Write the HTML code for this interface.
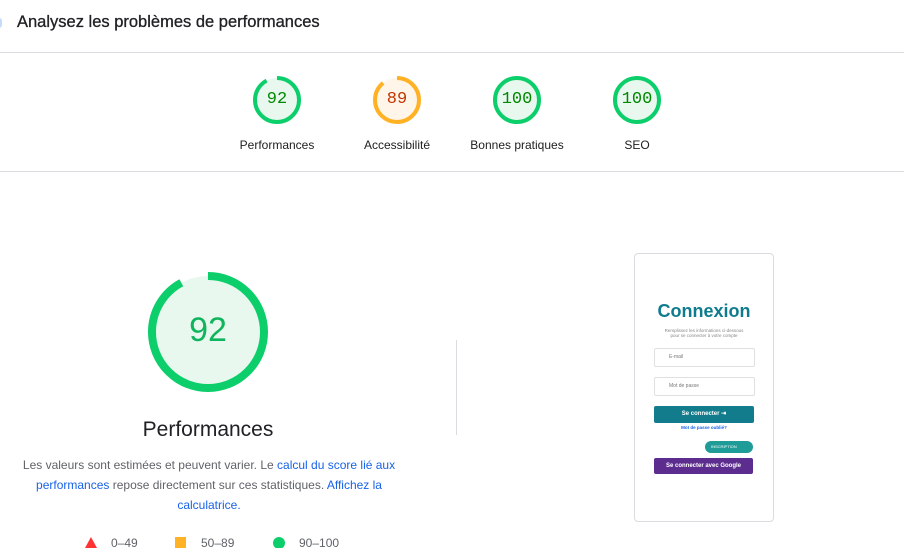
<!DOCTYPE html><html><head><meta charset="utf-8"><style>
body{margin:0;width:904px;height:548px;overflow:hidden;background:#fff;font-family:"Liberation Sans",sans-serif;position:relative}
.a{position:absolute}
.lbl{font-size:12px;color:#212121;text-align:center;width:120px}
.num{font-family:"Liberation Mono",monospace;font-size:17px;text-align:center;width:60px}
a{color:#1a62e8;text-decoration:none}
</style></head><body>
<div class="a" style="left:0;top:0;width:904px;height:52px;border-bottom:1px solid #dadce0"></div>
<div class="a" style="left:17px;top:13px;font-size:16.5px;color:#202124;-webkit-text-stroke:0.3px #202124">Analysez les problèmes de performances</div>
<div class="a" style="left:-4px;top:18px;width:6px;height:10px;border-radius:3px;background:#c6dafc"></div>
<div class="a" style="left:0;top:171px;width:904px;height:1px;background:#dadce0"></div>
<svg class="a" style="left:0;top:0" width="904" height="548">
<g fill="none" stroke-width="4">
<circle cx="277" cy="100" r="22" fill="#e8f8ee" stroke="none"/>
<circle cx="277" cy="100" r="22" stroke="#0cce6b" stroke-dasharray="127.2 138.2" transform="rotate(-90 277 100)"/>
<circle cx="397" cy="100" r="22" fill="#fff5e8" stroke="none"/>
<circle cx="397" cy="100" r="22" stroke="#ffa400" stroke-opacity=".85" stroke-dasharray="123 138.2" transform="rotate(-90 397 100)"/>
<circle cx="517" cy="100" r="22" fill="#e8f8ee" stroke="#0cce6b"/>
<circle cx="637" cy="100" r="22" fill="#e8f8ee" stroke="#0cce6b"/>
<circle cx="208" cy="332" r="56" fill="#e8f8ee" stroke="none"/>
<circle cx="208" cy="332" r="56" stroke="#0cce6b" stroke-width="8" stroke-dasharray="323.7 351.9" transform="rotate(-90 208 332)"/>
</g>
<line x1="456.5" y1="340" x2="456.5" y2="435" stroke="#dadce0"/>
<polygon points="91,537 97,548 85,548" fill="#ff3333"/>
<rect x="175" y="537" width="11" height="11" fill="#ffa400" opacity=".85"/>
<circle cx="279" cy="543" r="6" fill="#0cce6b"/>
</svg>
<div class="a num" style="left:247px;top:90px;color:#008800">92</div>
<div class="a num" style="left:367px;top:90px;color:#c33300">89</div>
<div class="a num" style="left:487px;top:90px;color:#008800">100</div>
<div class="a num" style="left:607px;top:90px;color:#008800">100</div>
<div class="a lbl" style="left:217px;top:138px">Performances</div>
<div class="a lbl" style="left:337px;top:138px">Accessibilité</div>
<div class="a lbl" style="left:457px;top:138px">Bonnes pratiques</div>
<div class="a lbl" style="left:577px;top:138px">SEO</div>
<div class="a" style="left:148px;top:311px;width:120px;text-align:center;font-size:34px;color:#0fb55c">92</div>
<div class="a" style="left:108px;top:418px;width:200px;text-align:center;font-size:21px;color:#202124">Performances</div>
<div class="a" style="left:18px;top:455px;width:382px;text-align:center;font-size:12px;line-height:20px;color:#5f6368">Les valeurs sont estimées et peuvent varier. Le <a>calcul du score lié aux performances</a> repose directement sur ces statistiques. <a>Affichez la calculatrice.</a></div>
<div class="a" style="left:111px;top:536px;font-size:12px;color:#5f6368">0–49</div>
<div class="a" style="left:201px;top:536px;font-size:12px;color:#5f6368">50–89</div>
<div class="a" style="left:299px;top:536px;font-size:12px;color:#5f6368">90–100</div>
<div class="a" style="left:634px;top:253px;width:138px;height:267px;border:1px solid #dadce0;border-radius:4px"></div>
<div class="a" style="left:634px;top:301px;width:140px;text-align:center;font-size:18px;font-weight:bold;color:#0e7c8e">Connexion</div>
<div class="a" style="left:664px;top:328px;width:80px;text-align:center;font-size:4.5px;line-height:5px;color:#888">Remplissez les informations ci-dessous pour se connecter à votre compte</div>
<div class="a" style="left:654px;top:348px;width:99px;height:17px;border:1px solid #e0e0e0;border-radius:2px;font-size:5px;color:#777;line-height:17px;text-indent:14px">E-mail</div>
<div class="a" style="left:654px;top:377px;width:99px;height:17px;border:1px solid #e0e0e0;border-radius:2px;font-size:5px;color:#777;line-height:17px;text-indent:14px">Mot de passe</div>
<div class="a" style="left:654px;top:406px;width:100px;height:17px;background:#137c8c;border-radius:2px;font-size:6px;color:#fff;line-height:17px;text-align:center;font-weight:bold">Se connecter ⇥</div>
<div class="a" style="left:654px;top:425px;width:100px;text-align:center;font-size:4.5px;color:#1a62e8;font-weight:bold">Mot de passe oublié?</div>
<div class="a" style="left:705px;top:441px;width:48px;height:12px;background:#1f9b98;border-radius:6px;font-size:4px;color:#fff;line-height:12px;text-indent:6px">INSCRIPTION</div>
<div class="a" style="left:654px;top:458px;width:99px;height:16px;background:#5c2d8e;border-radius:2px;font-size:6px;color:#fff;line-height:16px;text-align:center;font-weight:bold">Se connecter avec Google</div>
</body></html>
